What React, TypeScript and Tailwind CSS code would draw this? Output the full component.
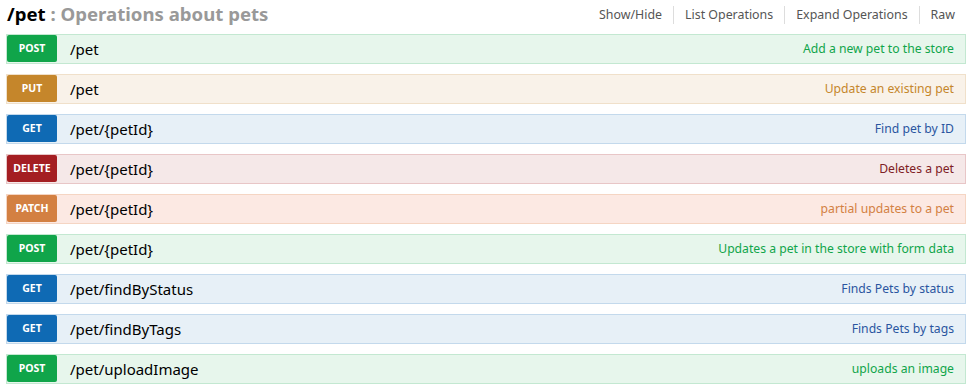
import React from "react";

type Op = { method: string; path: string; desc: string };

const ops: Op[] = [
  { method: "post", path: "/pet", desc: "Add a new pet to the store" },
  { method: "put", path: "/pet", desc: "Update an existing pet" },
  { method: "get", path: "/pet/{petId}", desc: "Find pet by ID" },
  { method: "delete", path: "/pet/{petId}", desc: "Deletes a pet" },
  { method: "patch", path: "/pet/{petId}", desc: "partial updates to a pet" },
  { method: "post", path: "/pet/{petId}", desc: "Updates a pet in the store with form data" },
  { method: "get", path: "/pet/findByStatus", desc: "Finds Pets by status" },
  { method: "get", path: "/pet/findByTags", desc: "Finds Pets by tags" },
  { method: "post", path: "/pet/uploadImage", desc: "uploads an image" },
];

const styles: Record<string, { box: string; badge: string; text: string }> = {
  post: { box: "bg-[#e7f6ec] border-[#c3e8d1]", badge: "bg-[#10a54a]", text: "text-[#10a54a]" },
  put: { box: "bg-[#f9f2e9] border-[#f0e0ca]", badge: "bg-[#c5862b]", text: "text-[#c5862b]" },
  get: { box: "bg-[#e7f0f7] border-[#c3d9ec]", badge: "bg-[#0f6ab4]", text: "text-[#2a55a0]" },
  delete: { box: "bg-[#f5e8e8] border-[#e8c6c7]", badge: "bg-[#a41e22]", text: "text-[#7e2024]" },
  patch: { box: "bg-[#fce9e3] border-[#f5d5c3]", badge: "bg-[#d38042]", text: "text-[#d38042]" },
};

export default function App() {
  return (
    <div
      className="w-[972px] h-[391px] bg-white px-[6px] overflow-hidden"
      style={{ fontFamily: '"Noto Sans", "Open Sans", sans-serif' }}
    >
      <div className="flex items-center justify-between h-[34px]">
        <h2 className="text-[18.6px] font-bold leading-none pl-[1px] -mt-[6px]">
          <span className="text-black">/pet</span>
          <span className="text-[#999]"> : Operations about pets</span>
        </h2>
        <div className="flex items-center text-[12.4px] text-[#555] -mt-[3px] pr-[11px]">
          <span className="pr-[11px]">Show/Hide</span>
          <span className="border-l border-[#ddd] h-[18px] flex items-center px-[11px]">List Operations</span>
          <span className="border-l border-[#ddd] h-[18px] flex items-center px-[11px]">Expand Operations</span>
          <span className="border-l border-[#ddd] h-[18px] flex items-center pl-[11px]">Raw</span>
        </div>
      </div>
      <div className="flex flex-col gap-[10px]">
        {ops.map((op, i) => {
          const s = styles[op.method];
          return (
            <div key={i} className={`flex items-start h-[30px] border ${s.box}`}>
              <div
                className={`w-[50px] h-[27px] rounded-[2px] ${s.badge} text-white text-[10.5px] font-bold uppercase flex items-center justify-center pt-[1px]`}
              >
                {op.method}
              </div>
              <div className="flex-1 flex items-center h-[28px] pl-[13px] pr-[11px]">
                <span className="text-[15px] text-black">{op.path}</span>
                <span className={`ml-auto text-[12.2px] ${s.text}`}>{op.desc}</span>
              </div>
            </div>
          );
        })}
      </div>
    </div>
  );
}
